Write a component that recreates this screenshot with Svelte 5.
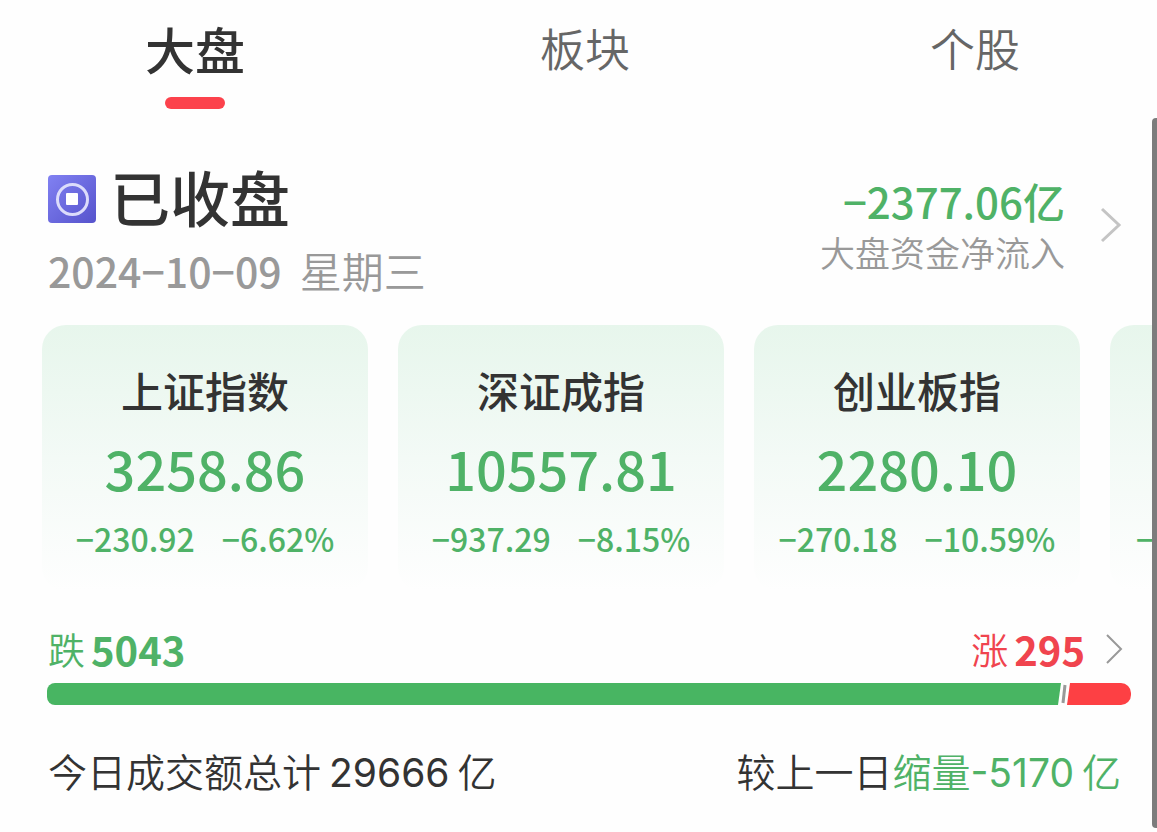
<script lang="ts">
    interface IndexQuote {
        name: string;
        value: string;
        change: string;
        percent: string;
    }

    const tabs = ["大盘", "板块", "个股"];

    const quotes: IndexQuote[] = [
        { name: "上证指数", value: "3258.86", change: "−230.92", percent: "−6.62%" },
        { name: "深证成指", value: "10557.81", change: "−937.29", percent: "−8.15%" },
        { name: "创业板指", value: "2280.10", change: "−270.18", percent: "−10.59%" },
    ];

    const falling = 5043;
    const rising = 295;

    let activeTab = $state(0);
</script>

<main class="page">
    <nav class="tabs">
        {#each tabs as tab, i}
            <button
                type="button"
                class="tab"
                class:active={activeTab === i}
                onclick={() => (activeTab = i)}
            >
                {tab}
            </button>
        {/each}
    </nav>

    <header class="summary">
        <div class="status">
            <div class="status-title">
                <svg class="status-icon" viewBox="0 0 48 48" aria-hidden="true">
                    <defs>
                        <linearGradient id="coin" x1="0" y1="0" x2="1" y2="1">
                            <stop offset="0" stop-color="#8181f2" />
                            <stop offset="1" stop-color="#5653cc" />
                        </linearGradient>
                    </defs>
                    <rect width="48" height="48" rx="4" fill="url(#coin)" />
                    <circle
                        cx="24.5"
                        cy="24.5"
                        r="15"
                        fill="none"
                        stroke="#dcdcfb"
                        stroke-width="3"
                    />
                    <rect x="18" y="18" width="12" height="12" rx="1" fill="#fff" />
                </svg>
                <h1>已收盘</h1>
            </div>
            <div class="date">
                <span class="day">2024−10−09</span>
                <span class="weekday">星期三</span>
            </div>
        </div>

        <button type="button" class="flow">
            <span class="flow-text">
                <span class="flow-value">−2377.06亿</span>
                <span class="flow-label">大盘资金净流入</span>
            </span>
            <svg class="flow-chevron" viewBox="0 0 22 36" aria-hidden="true">
                <path d="M2 2 L19 18 L2 34" />
            </svg>
        </button>
    </header>

    <section class="quotes">
        {#each quotes as quote}
            <article class="card">
                <h2>{quote.name}</h2>
                <div class="value">{quote.value}</div>
                <div class="changes">
                    <span>{quote.change}</span>
                    <span>{quote.percent}</span>
                </div>
            </article>
        {/each}
        <article class="card peek">
            <div class="changes"><span>−</span></div>
        </article>
    </section>

    <section class="breadth">
        <div class="breadth-head">
            <div class="count down">跌<b>{falling}</b></div>
            <button type="button" class="count up">
                涨<b>{rising}</b>
                <svg class="breadth-chevron" viewBox="0 0 18 32" aria-hidden="true">
                    <path d="M2 2 L16 16 L2 30" />
                </svg>
            </button>
        </div>
        <div class="bar">
            <div class="bar-down" style="flex-grow: {falling}"></div>
            <svg class="bar-split" viewBox="0 0 6 22" aria-hidden="true">
                <path d="M4 2 L2 20" />
            </svg>
            <div class="bar-up" style="flex-grow: {rising}"></div>
        </div>
    </section>

    <footer class="turnover">
        <div>今日成交额总计<span class="amount">29666</span>亿</div>
        <div>
            较上一日<span class="shrink">缩量<span class="delta">-5170</span>亿</span>
        </div>
    </footer>

    <div class="scrollbar"></div>
</main>

<style>
    :global(body) {
        margin: 0;
        background: #fefefe;
    }

    .page {
        position: relative;
        box-sizing: border-box;
        min-height: 100vh;
        overflow: hidden;
        color: #333;
        font-family: "Noto Sans CJK SC", sans-serif;
    }

    button {
        padding: 0;
        border: 0;
        background: none;
        color: inherit;
        font: inherit;
        cursor: pointer;
    }

    h1,
    h2 {
        margin: 0;
        font-weight: 500;
    }

    /* the tab strip runs a little past the right edge */
    .tabs {
        display: grid;
        grid-template-columns: repeat(3, 1fr);
        margin-right: -13px;
        height: 109px;
    }

    .tab {
        display: flex;
        flex-direction: column;
        align-items: center;
        padding-top: 16px;
        color: #666;
        font-size: 45px;
        font-weight: 350;
        line-height: 64px;
    }

    .tab.active {
        color: #333;
        font-size: 50px;
        font-weight: 500;
    }

    .tab.active::after {
        content: "";
        width: 60px;
        height: 12px;
        margin-top: 17px;
        border-radius: 6px;
        background: #fc424c;
    }

    .summary {
        display: flex;
        justify-content: space-between;
        padding: 54px 35px 0 48px;
    }

    .status-title {
        display: flex;
        align-items: center;
        gap: 14px;
        height: 72px;
    }

    .status-icon {
        width: 48px;
        height: 48px;
    }

    h1 {
        padding-bottom: 6px;
        font-size: 60px;
        line-height: 66px;
    }

    .date {
        display: flex;
        align-items: center;
        gap: 18px;
        color: #999;
        font-size: 41px;
        line-height: 70px;
    }

    .day {
        font-weight: 500;
    }

    .weekday {
        font-size: 42px;
        font-weight: 350;
    }

    .flow {
        display: flex;
        align-items: center;
        gap: 35px;
        height: 124px;
    }

    .flow-text {
        display: flex;
        flex-direction: column;
        align-items: flex-end;
    }

    .flow-value {
        color: #4fb267;
        font-size: 42px;
        font-weight: 500;
        line-height: 54px;
    }

    .flow-label {
        color: #999;
        font-size: 35px;
        font-weight: 350;
        line-height: 48px;
    }

    .flow-chevron,
    .breadth-chevron {
        fill: none;
        stroke: #c4c4c4;
        stroke-width: 3;
    }

    .flow-chevron {
        width: 22px;
        height: 36px;
    }

    .quotes {
        display: grid;
        grid-template-columns: repeat(3, 1fr) 47px;
        gap: 30px;
        padding: 20px 0 0 42px;
    }

    .card {
        display: flex;
        flex-direction: column;
        align-items: center;
        box-sizing: border-box;
        height: 266px;
        padding-top: 34px;
        border-radius: 24px;
        background: linear-gradient(#e7f6ec, #f3faf6 50%, #fefefe);
        white-space: nowrap;
    }

    .card h2 {
        font-size: 42px;
        line-height: 62px;
    }

    .value {
        color: #4fb267;
        font-size: 54px;
        font-weight: 500;
        line-height: 93px;
    }

    .changes {
        display: flex;
        gap: 27px;
        color: #4fb267;
        font-size: 32px;
        font-weight: 500;
        line-height: 48px;
    }

    .card.peek {
        align-items: flex-start;
        padding: 189px 0 0 26px;
        border-radius: 24px 0 0 24px;
    }

    .breadth {
        padding: 30px 26px 0 47px;
    }

    .breadth-head {
        display: flex;
        justify-content: space-between;
        padding: 0 8px 0 1px;
    }

    .count {
        display: flex;
        align-items: center;
        gap: 6px;
        font-size: 37px;
        font-weight: 350;
        line-height: 56px;
    }

    .count b {
        font-size: 40px;
        font-weight: 700;
    }

    .down,
    .shrink {
        color: #4fb267;
    }

    .up {
        color: #f0444e;
    }

    .breadth-chevron {
        width: 18px;
        height: 32px;
        margin-left: 14px;
        stroke: #999;
        stroke-width: 2;
    }

    .bar {
        display: flex;
        height: 22px;
        margin-top: 6px;
    }

    .bar-down {
        border-radius: 8px 0 0 8px;
        background: #48b562;
        clip-path: polygon(0 0, 100% 0, calc(100% - 3px) 100%, 0 100%);
    }

    .bar-split {
        width: 6px;
        fill: none;
        stroke: #999;
        stroke-width: 3;
    }

    .bar-up {
        min-width: 64px;
        border-radius: 0 10px 10px 0;
        background: #fd4044;
        clip-path: polygon(3px 0, 100% 0, 100% 100%, 0 100%);
    }

    .turnover {
        display: flex;
        justify-content: space-between;
        padding: 38px 36px 28px 48px;
        font-family: Inter, "Noto Sans CJK SC", sans-serif;
        font-size: 39px;
        font-weight: 350;
        line-height: 60px;
    }

    .amount,
    .delta {
        font-weight: 400;
    }

    .amount {
        margin: 0 8px;
    }

    .delta {
        margin-right: 8px;
    }

    .scrollbar {
        position: absolute;
        top: 118px;
        right: 0;
        bottom: 4px;
        width: 5px;
        border-radius: 4px 0 0 4px;
        background: #7c7c7c;
    }
</style>
